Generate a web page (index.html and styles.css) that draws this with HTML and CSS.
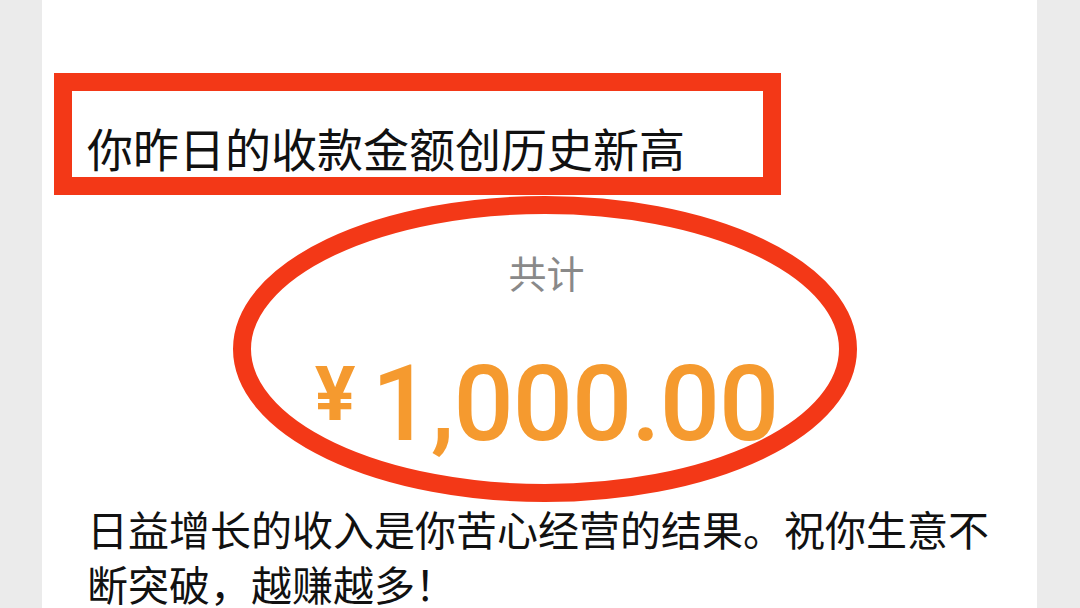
FILE: index.html
```html
<!DOCTYPE html>
<html lang="zh-CN">
<head>
    <meta charset="UTF-8">
    <meta name="viewport" content="width=device-width, initial-scale=1.0">
    <title>收款通知</title>
    <link rel="stylesheet" href="styles.css">
</head>
<body>
    <div class="tarjeta">
        <h1 class="titulo">你昨日的收款金额创历史新高</h1>

        <div class="resumen">
            <p class="etiqueta">共计</p>
            <p class="monto"><span class="moneda">¥</span>1,000.00</p>
        </div>

        <p class="mensaje">日益增长的收入是你苦心经营的结果。祝你生意不断突破，越赚越多！</p>

        <!-- marcas rojas encima del contenido -->
        <div class="marca-rect"></div>
        <svg class="marca-ovalo" width="624" height="306" viewBox="0 0 624 306">
            <ellipse cx="312" cy="153" rx="303" ry="144" fill="none" stroke="#f33817" stroke-width="18"></ellipse>
        </svg>
    </div>
</body>
</html>
```

FILE: styles.css
```css
body {
    margin: 0;
    background-color: #ebebeb;
    font-family: "Noto Sans CJK SC", "Noto Sans", sans-serif;
    color: #111;
}
.tarjeta {
    position: relative;
    margin: 0 43px 0 42px;
    min-height: 608px;
    background-color: white;
    padding: 117px 27px 0 45px;
    box-sizing: border-box;
}
.titulo {
    margin: 0;
    font-size: 46px;
    font-weight: normal;
    line-height: 60px;
}
.resumen {
    text-align: center;
    padding-right: 4px;
}
.etiqueta {
    margin: 70px 0 0 0;
    font-size: 38px;
    line-height: 50px;
    color: #898989;
}
.monto {
    margin: 32px 0 0 0;
    font-family: Roboto, "Liberation Sans", sans-serif;
    font-weight: 500;
    font-size: 106px;
    line-height: 130px;
    letter-spacing: -1px;
    color: #f59a2f;
}
.moneda {
    font-size: 76px;
    font-weight: 700;
    vertical-align: 20px;
    margin-right: 17px;
}
.mensaje {
    margin: 32px 0 0 0;
    font-size: 41px;
    line-height: 55px;
}
.marca-rect {
    position: absolute;
    left: 12px;
    top: 73px;
    width: 727px;
    height: 122px;
    border: 18px solid #f33817;
    box-sizing: border-box;
}
.marca-ovalo {
    position: absolute;
    left: 191px;
    top: 196px;
}
```
